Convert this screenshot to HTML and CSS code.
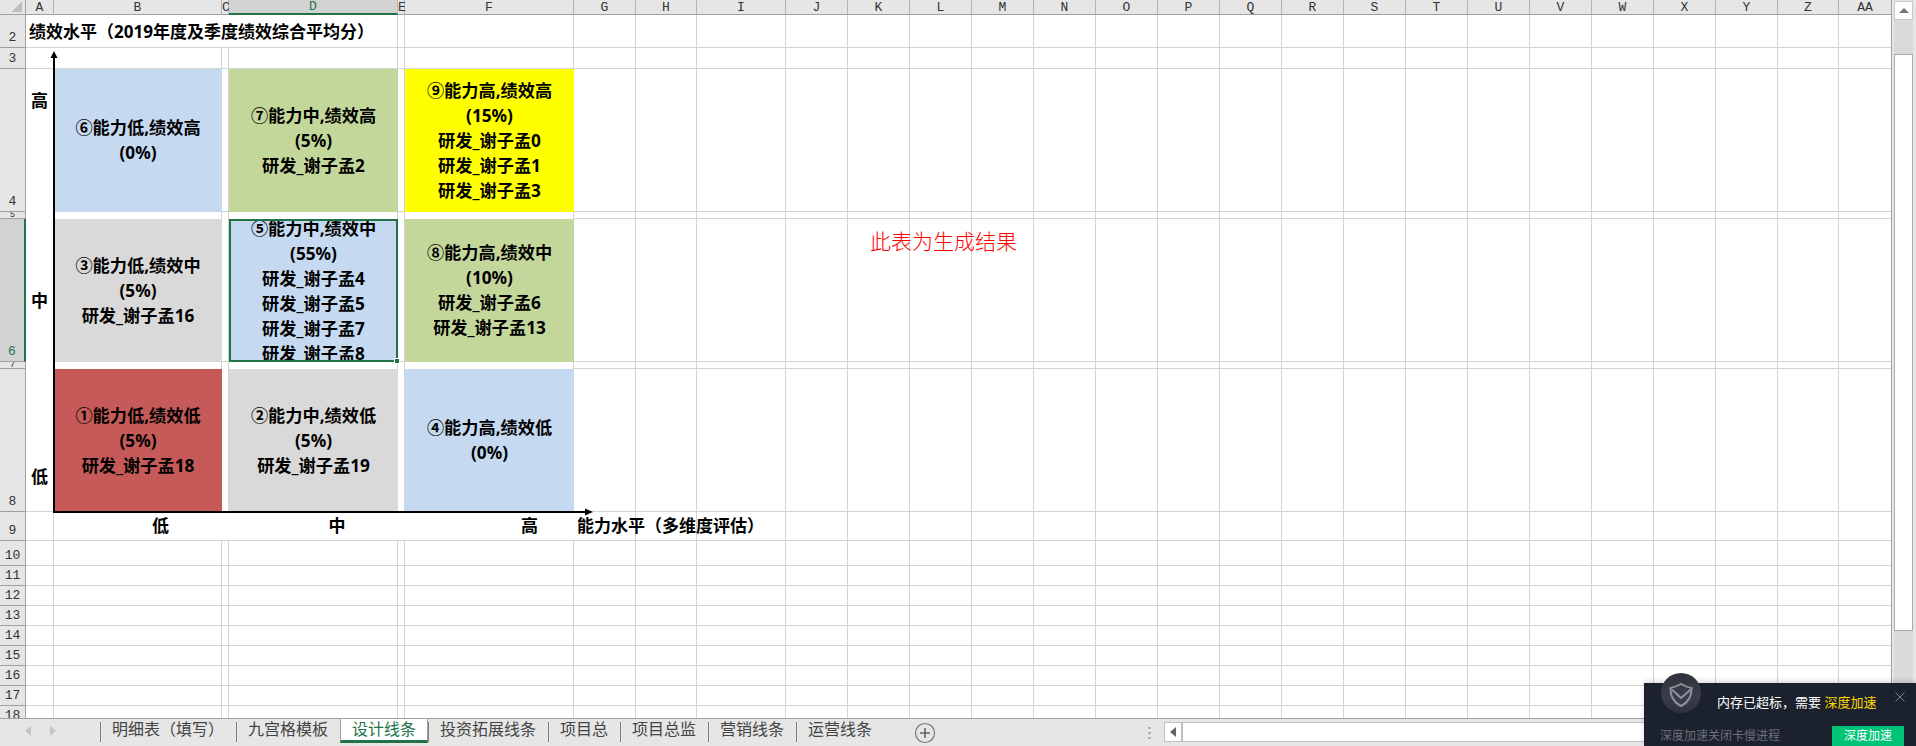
FILE: index.html
```html
<!DOCTYPE html>
<html lang="zh-CN">
<head>
<meta charset="UTF-8">
<title>九宫格 - 设计线条</title>
<link rel="stylesheet" href="styles.css">
</head>
<body>

<div class="app">

<div class="main">
<div class="sheet">
<table class="grid">
<colgroup>
<col class="w-head"><col class="w-a"><col class="w-b"><col class="w-gap"><col class="w-d"><col class="w-gap"><col class="w-d">
<col class="w-g"><col class="w-h"><col class="w-i"><col class="w-std" span="16"><col class="w-z"><col class="w-aa">
</colgroup>

<tr class="h-col">
<th class="corner"></th><th>A</th><th>B</th><th>C</th><th class="sel-col">D</th><th>E</th><th>F</th><th>G</th><th>H</th><th>I</th><th>J</th><th>K</th><th>L</th><th>M</th><th>N</th><th>O</th><th>P</th><th>Q</th><th>R</th><th>S</th><th>T</th><th>U</th><th>V</th><th>W</th><th>X</th><th>Y</th><th>Z</th><th>AA</th>
</tr>

<tr class="h-2">
<th>2</th><td colspan="4" class="title">绩效水平（2019年度及季度绩效综合平均分）</td><td></td><td></td>
<td></td><td></td><td></td><td></td><td></td><td></td><td></td><td></td><td></td><td></td><td></td><td></td><td></td><td></td><td></td><td></td><td></td><td></td><td></td><td></td><td></td>
</tr>

<tr class="h-3">
<th>3</th><td class="no-right"></td><td></td><td></td><td></td><td></td><td></td>
<td></td><td></td><td></td><td></td><td></td><td></td><td></td><td></td><td></td><td></td><td></td><td></td><td></td><td></td><td></td><td></td><td></td><td></td><td></td><td></td><td></td>
</tr>

<tr class="h-quad">
<th>4</th>
<td rowspan="5" class="y-axis">
    <span class="y-high">高</span>
    <span class="y-mid">中</span>
    <span class="y-low">低</span>
</td>
<td class="fill"><div class="quad blue">⑥能力低,绩效高<br>(0%)</div></td>
<td></td>
<td class="fill"><div class="quad green">⑦能力中,绩效高<br>(5%)<br>研发_谢子孟2</div></td>
<td></td>
<td class="fill"><div class="quad yellow">⑨能力高,绩效高<br>(15%)<br>研发_谢子孟0<br>研发_谢子孟1<br>研发_谢子孟3</div></td>
<td></td><td></td><td></td><td></td><td></td><td></td><td></td><td></td><td></td><td></td><td></td><td></td><td></td><td></td><td></td><td></td><td></td><td></td><td></td><td></td><td></td>
</tr>

<tr class="h-gap">
<th><div class="clip">5</div></th><td class="no-bottom"></td><td class="no-bottom"></td><td class="no-bottom"></td><td class="no-bottom"></td><td class="no-bottom"></td>
<td></td><td></td><td></td><td></td><td></td><td></td><td></td><td></td><td></td><td></td><td></td><td></td><td></td><td></td><td></td><td></td><td></td><td></td><td></td><td></td><td></td>
</tr>

<tr class="h-quad">
<th class="sel-row">6</th>
<td class="fill"><div class="quad gray">③能力低,绩效中<br>(5%)<br>研发_谢子孟16</div></td>
<td></td>
<td class="fill holder">
    <div class="quad blue selected">⑤能力中,绩效中<br>(55%)<br>研发_谢子孟4<br>研发_谢子孟5<br>研发_谢子孟7<br>研发_谢子孟8</div>
    <span class="fill-handle"></span>
</td>
<td></td>
<td class="fill"><div class="quad green">⑧能力高,绩效中<br>(10%)<br>研发_谢子孟6<br>研发_谢子孟13</div></td>
<td></td><td></td><td></td><td></td><td class="note">此表为生成结果</td><td></td><td></td><td></td><td></td><td></td><td></td><td></td><td></td><td></td><td></td><td></td><td></td><td></td><td></td><td></td><td></td>
</tr>

<tr class="h-gap">
<th><div class="clip">7</div></th><td class="no-bottom"></td><td class="no-bottom"></td><td class="no-bottom"></td><td class="no-bottom"></td><td class="no-bottom"></td>
<td></td><td></td><td></td><td></td><td></td><td></td><td></td><td></td><td></td><td></td><td></td><td></td><td></td><td></td><td></td><td></td><td></td><td></td><td></td><td></td><td></td>
</tr>

<tr class="h-quad">
<th>8</th>
<td class="fill"><div class="quad red">①能力低,绩效低<br>(5%)<br>研发_谢子孟18</div></td>
<td></td>
<td class="fill"><div class="quad gray">②能力中,绩效低<br>(5%)<br>研发_谢子孟19</div></td>
<td></td>
<td class="fill"><div class="quad blue">④能力高,绩效低<br>(0%)</div></td>
<td></td><td></td><td></td><td></td><td></td><td></td><td></td><td></td><td></td><td></td><td></td><td></td><td></td><td></td><td></td><td></td><td></td><td></td><td></td><td></td><td></td>
</tr>

<tr class="h-9">
<th>9</th><td></td>
<td colspan="2" class="x-label x-low">低</td>
<td colspan="2" class="x-label x-mid">中</td>
<td class="x-label x-high">高</td>
<td class="x-title">能力水平（多维度评估）</td><td></td><td></td><td></td><td></td><td></td><td></td><td></td><td></td><td></td><td></td><td></td><td></td><td></td><td></td><td></td><td></td><td></td><td></td><td></td><td></td>
</tr>

<tr class="h-10"><th>10</th><td></td><td></td><td></td><td></td><td></td><td></td><td></td><td></td><td></td><td></td><td></td><td></td><td></td><td></td><td></td><td></td><td></td><td></td><td></td><td></td><td></td><td></td><td></td><td></td><td></td><td></td><td></td></tr>
<tr class="h-row"><th>11</th><td></td><td></td><td></td><td></td><td></td><td></td><td></td><td></td><td></td><td></td><td></td><td></td><td></td><td></td><td></td><td></td><td></td><td></td><td></td><td></td><td></td><td></td><td></td><td></td><td></td><td></td><td></td></tr>
<tr class="h-row"><th>12</th><td></td><td></td><td></td><td></td><td></td><td></td><td></td><td></td><td></td><td></td><td></td><td></td><td></td><td></td><td></td><td></td><td></td><td></td><td></td><td></td><td></td><td></td><td></td><td></td><td></td><td></td><td></td></tr>
<tr class="h-row"><th>13</th><td></td><td></td><td></td><td></td><td></td><td></td><td></td><td></td><td></td><td></td><td></td><td></td><td></td><td></td><td></td><td></td><td></td><td></td><td></td><td></td><td></td><td></td><td></td><td></td><td></td><td></td><td></td></tr>
<tr class="h-row"><th>14</th><td></td><td></td><td></td><td></td><td></td><td></td><td></td><td></td><td></td><td></td><td></td><td></td><td></td><td></td><td></td><td></td><td></td><td></td><td></td><td></td><td></td><td></td><td></td><td></td><td></td><td></td><td></td></tr>
<tr class="h-row"><th>15</th><td></td><td></td><td></td><td></td><td></td><td></td><td></td><td></td><td></td><td></td><td></td><td></td><td></td><td></td><td></td><td></td><td></td><td></td><td></td><td></td><td></td><td></td><td></td><td></td><td></td><td></td><td></td></tr>
<tr class="h-row"><th>16</th><td></td><td></td><td></td><td></td><td></td><td></td><td></td><td></td><td></td><td></td><td></td><td></td><td></td><td></td><td></td><td></td><td></td><td></td><td></td><td></td><td></td><td></td><td></td><td></td><td></td><td></td><td></td></tr>
<tr class="h-row"><th>17</th><td></td><td></td><td></td><td></td><td></td><td></td><td></td><td></td><td></td><td></td><td></td><td></td><td></td><td></td><td></td><td></td><td></td><td></td><td></td><td></td><td></td><td></td><td></td><td></td><td></td><td></td><td></td></tr>
<tr class="h-row"><th>18</th><td></td><td></td><td></td><td></td><td></td><td></td><td></td><td></td><td></td><td></td><td></td><td></td><td></td><td></td><td></td><td></td><td></td><td></td><td></td><td></td><td></td><td></td><td></td><td></td><td></td><td></td><td></td></tr>
</table>

<!-- 坐标轴箭头 -->
<svg class="axes" width="600" height="520" viewBox="0 0 600 520">
    <path d="M54 56V512H586" fill="none" stroke="#000" stroke-width="2"/>
    <path d="M54 51L50.5 58H57.5Z" fill="#000"/>
    <path d="M593 512L585 508.5V515.5Z" fill="#000"/>
</svg>
</div>

<div class="vscroll">
    <div class="vbtn"><span class="tri-up"></span></div>
    <div class="vtrack"><div class="vthumb"></div></div>
</div>
</div>

<div class="tabbar">
    <div class="tab-nav">
        <span class="tri-left"></span>
        <span class="tri-right"></span>
    </div>
    <div class="tab">明细表（填写）</div>
    <div class="tab">九宫格模板</div>
    <div class="tab active">设计线条</div>
    <div class="tab">投资拓展线条</div>
    <div class="tab">项目总</div>
    <div class="tab">项目总监</div>
    <div class="tab">营销线条</div>
    <div class="tab">运营线条</div>
    <svg class="add-sheet" width="22" height="22" viewBox="0 0 22 22">
        <circle cx="11" cy="11" r="9.5" fill="none" stroke="#777" stroke-width="1.2"/>
        <path d="M11 6V16M6 11H16" stroke="#666" stroke-width="1.6"/>
    </svg>
    <div class="hdots"></div>
    <div class="hscroll">
        <div class="hbtn"><span class="tri-left dark"></span></div>
        <div class="hthumb"></div>
    </div>
</div>

<!-- 右下角弹窗 -->
<div class="toast">
    <div class="toast-badge">
        <svg width="40" height="40" viewBox="0 0 40 40">
            <path d="M20 11C23.500 13 27 14.500 30.500 15C30.800 23 27 29.500 20 33C13 29.500 9.200 23 9.500 15C13 14.500 16.500 13 20 11Z" fill="none" stroke="#8f929b" stroke-width="2"/>
            <path d="M11 16.700L20 25L29.500 16.700" fill="none" stroke="#8f929b" stroke-width="2"/>
        </svg>
    </div>
    <svg class="toast-close" width="10" height="10" viewBox="0 0 10 10">
        <path d="M0.500 0.500L9.500 9.500M9.500 0.500L0.500 9.500" stroke="#7c808a" stroke-width="1"/>
    </svg>
    <div class="toast-msg">内存已超标，需要 <span class="gold">深度加速</span></div>
    <div class="toast-foot">
        <span class="toast-hint">深度加速关闭卡慢进程</span>
        <span class="toast-btn">深度加速</span>
    </div>
</div>

</div>

</body>
</html>
```

FILE: styles.css
```css
* {box-sizing: border-box;}
body {margin: 0; overflow: hidden; background: #fff; font-family: "Noto Sans", "Noto Sans CJK SC", sans-serif; color: #000;}

.app {position: relative; display: flex; flex-direction: column; width: 1916px; height: 746px; overflow: hidden;}
.main {display: flex; flex: 1; min-height: 0;}

/* sheet */
.sheet {position: relative; width: 1892px; overflow: hidden; border-right: 1px solid #a0a0a0;}
.grid {table-layout: fixed; border-collapse: separate; border-spacing: 0; width: 1892px;}
.grid td {padding: 0; border-right: 1px solid #d4d4d4; border-bottom: 1px solid #d4d4d4;}
.grid th {padding: 0; background: #e6e6e6; border-right: 1px solid #a0a0a0; border-bottom: 1px solid #a0a0a0; color: #333; font: 13px/19px "Liberation Mono", monospace; vertical-align: bottom;}

.w-head {width: 26px;}
.w-a {width: 28px;}
.w-b {width: 168px;}
.w-gap {width: 7px;}
.w-d {width: 169px;}
.w-g {width: 62px;}
.w-h {width: 61px;}
.w-i {width: 89px;}
.w-std {width: 62px;}
.w-z {width: 61px;}
.w-aa {width: 53px;}

.h-col {height: 15px;}
.h-col th {line-height: 13px; vertical-align: middle;}
.h-col th + th {border-right-color: #b4b4b4;}
.h-2 {height: 33px;}
.h-3 {height: 21px;}
.h-quad {height: 143px;}
.h-gap {height: 7px;}
.h-9 {height: 27px;}
.h-10 {height: 25px;}
.h-row {height: 20px;}

.corner {background: linear-gradient(to bottom right, transparent 50%, #bcbcbc 50%) 12px 2px / 10px 10px no-repeat #e6e6e6 !important;}
.grid .sel-col {background: #d2d2d2; color: #217346; border-bottom: 2px solid #217346;}
.grid .sel-row {background: #d2d2d2; color: #217346; border-right: 2px solid #217346;}
.clip {height: 6px; overflow: hidden; line-height: 6px; font-size: 9px;}

.grid .no-right {border-right: none;}
.grid .no-bottom {border-bottom: none;}
.grid .fill {border: none;}

.title {padding: 0 0 2px 3px !important; font-size: 17px; font-weight: 700; white-space: nowrap;}

.y-axis {vertical-align: top; text-align: center; font-size: 17px; font-weight: 700; line-height: 24px;}
.y-axis span {display: block;}
.y-high {margin-top: 20px;}
.y-mid {margin-top: 176px;}
.y-low {margin-top: 152px;}

.quad {display: flex; align-items: center; justify-content: center; height: 143px; padding-bottom: 1px; overflow: hidden; text-align: center; font-size: 17.200px; font-weight: 700; line-height: 25px; white-space: nowrap;}
.blue {background: #c5d9f1;}
.green {background: #c4d79b;}
.yellow {background: #ffff00;}
.gray {background: #d9d9d9;}
.red {background: #c55a58;}

.selected {border: 2px solid #217346; padding-bottom: 0;}
.holder {position: relative;}
.fill-handle {position: absolute; right: -2px; bottom: -2px; width: 6px; height: 6px; background: #217346; border: 1px solid #fff;}

.note {padding: 8px 0 0 22px !important; vertical-align: top; color: #ff0000; font-size: 21px; font-weight: 300; line-height: 28px; white-space: nowrap;}

.x-label {font-size: 17px; font-weight: 700; text-align: center;}
.grid .x-label {border-right: none;}
.grid .x-low {padding: 0 0 3px 38px;}
.grid .x-mid {padding: 0 0 3px 40px;}
.grid .x-high {padding: 0 0 3px 80px;}
.x-title {padding: 0 0 3px 3px !important; font-size: 17px; font-weight: 700; white-space: nowrap;}

.axes {position: absolute; left: 0; top: 0;}

/* vertical scrollbar */
.vscroll {display: flex; flex-direction: column; flex: 1; background: #e6e6e6; padding: 1px 3px 0 2px;}
.vbtn {display: flex; align-items: center; justify-content: center; height: 19px; background: #fff; border: 1px solid #c8c8c8;}
.vtrack {flex: 1; background: #dadada; padding-top: 34px;}
.vthumb {height: 577px; background: #fff; border: 1px solid #ababab;}
.tri-up {width: 0; height: 0; border-left: 5px solid transparent; border-right: 5px solid transparent; border-bottom: 5px solid #777;}

/* sheet tabs */
.tabbar {display: flex; align-items: flex-start; height: 28px; background: #e6e6e6; border-top: 1px solid #a0a0a0; color: #444; font-size: 16px;}
.tab-nav {display: flex; align-items: center; gap: 19px; width: 100px; height: 24px; padding-left: 25px;}
.tri-left {width: 0; height: 0; border-top: 5px solid transparent; border-bottom: 5px solid transparent; border-right: 6px solid #c4c4c4;}
.tri-right {width: 0; height: 0; border-top: 5px solid transparent; border-bottom: 5px solid transparent; border-left: 6px solid #c4c4c4;}
.tri-left.dark {border-right-color: #666;}

.tab {position: relative; height: 24px; padding: 0 12px; line-height: 21px; white-space: nowrap;}
.tab::before {content: ""; position: absolute; left: 0; top: 3px; height: 20px; border-left: 1px solid #808080;}
.tab:last-of-type::after {content: ""; position: absolute; right: 0; top: 3px; height: 20px; border-left: 1px solid #808080;}
.tab.active {background: #fff; color: #217346; border-bottom: 3px solid #217346; border-left: 1px solid #a0a0a0; border-right: 1px solid #a0a0a0; padding: 0 11px;}
.tab.active::before {display: none;}

.add-sheet {margin: 3px 0 0 30px;}
.hdots {width: 3px; height: 12px; margin: 8px 0 0 212px; background: repeating-linear-gradient(#b0b0b0 0 2px, transparent 2px 5px);}
.hscroll {display: flex; width: 728px; height: 20px; margin: 3px 0 0 13px; border: 1px solid #c0c0c0; background: #fff;}
.hbtn {display: flex; align-items: center; justify-content: center; width: 18px; border-right: 2px solid #c0c0c0;}
.hthumb {flex: 1;}

/* toast */
.toast {position: absolute; right: 0; bottom: 0; width: 272px; height: 63px; background: #1c212e; color: #fff; box-shadow: 0 -2px 5px rgba(0,0,0,0.15);}
.toast-badge {position: absolute; left: 17px; top: -10px; width: 40px; height: 40px; border-radius: 50%; background: linear-gradient(#2f323c, #3b3e4a 60%, #2e313c);}
.toast-close {position: absolute; left: 251px; top: 9px;}
.toast-msg {position: absolute; left: 73px; top: 10px; font-size: 13px; line-height: 18px; white-space: nowrap;}
.gold {color: #ffd800;}
.toast-foot {position: absolute; left: 16px; right: 12px; top: 43px; display: flex; justify-content: space-between;}
.toast-hint {color: #6d7079; font-size: 12px; line-height: 20px;}
.toast-btn {width: 72px; height: 20px; background: #00c377; text-align: center; font-size: 12px; line-height: 20px;}
```
